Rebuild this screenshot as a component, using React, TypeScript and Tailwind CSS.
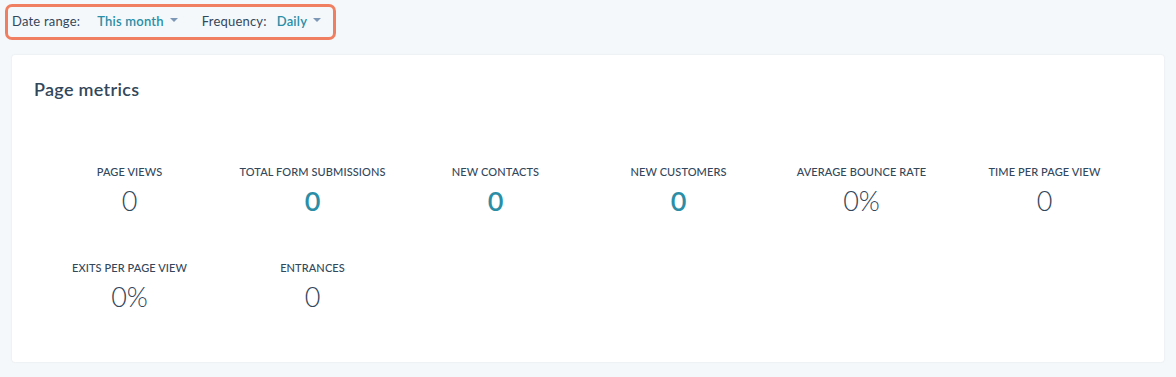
import React from 'react';

type Metric = { label: string; value: string; link?: boolean };

const rowOne: Metric[] = [
  { label: 'Page views', value: '0' },
  { label: 'Total form submissions', value: '0', link: true },
  { label: 'New contacts', value: '0', link: true },
  { label: 'New customers', value: '0', link: true },
  { label: 'Average bounce rate', value: '0%' },
  { label: 'Time per page view', value: '0' },
];

const rowTwo: Metric[] = [
  { label: 'Exits per page view', value: '0%' },
  { label: 'Entrances', value: '0' },
];

function Caret() {
  return <span className="ml-[6px] inline-block border-x-[4px] border-t-[4px] border-x-transparent border-t-[#7c98b6] translate-y-[-2px]" />;
}

function MetricCell({ m }: { m: Metric }) {
  return (
    <div className="flex flex-col items-center">
      <div className="text-[11px] leading-4 font-medium uppercase text-[#33475b] tracking-[0.1px]">{m.label}</div>
      <div
        className={`mt-[5px] text-[27px] leading-8 ${m.link ? 'font-semibold text-[#2b8ea6]' : 'font-light text-[#33475b]'}`}
      >
        {m.value}
      </div>
    </div>
  );
}

export default function App() {
  return (
    <div className="min-h-[377px] w-[1176px] bg-[#f5f8fa] font-['Lato','Liberation_Sans',sans-serif] text-[#33475b]">
      <div className="pl-[5px] pt-[4px]">
        <div className="flex h-[36px] w-[331px] items-center rounded-[7px] border-[3px] border-[#f07f61] pl-[4px] text-[13px] tracking-[0.2px]">
          <span>Date range:</span>
          <span className="ml-[17px] font-semibold text-[#2b8ea6]">This month</span>
          <Caret />
          <span className="ml-[24px]">Frequency:</span>
          <span className="ml-[10px] font-semibold text-[#2b8ea6]">Daily</span>
          <Caret />
        </div>
      </div>

      <div className="ml-[12px] mt-[15px] h-[307px] w-[1152px] rounded-[3px] bg-white px-[22px] pt-[22px] shadow-[0_0_2px_rgba(45,62,80,0.12)]">
        <h2 className="text-[18px] leading-6 font-semibold tracking-[0.3px] text-[#33475b]">Page metrics</h2>
        <div className="ml-[4px] mt-[63px] grid w-[1098px] grid-cols-6">
          {rowOne.map((m) => (
            <MetricCell key={m.label} m={m} />
          ))}
        </div>
        <div className="ml-[4px] mt-[43px] grid w-[1098px] grid-cols-6">
          {rowTwo.map((m) => (
            <MetricCell key={m.label} m={m} />
          ))}
        </div>
      </div>
    </div>
  );
}
